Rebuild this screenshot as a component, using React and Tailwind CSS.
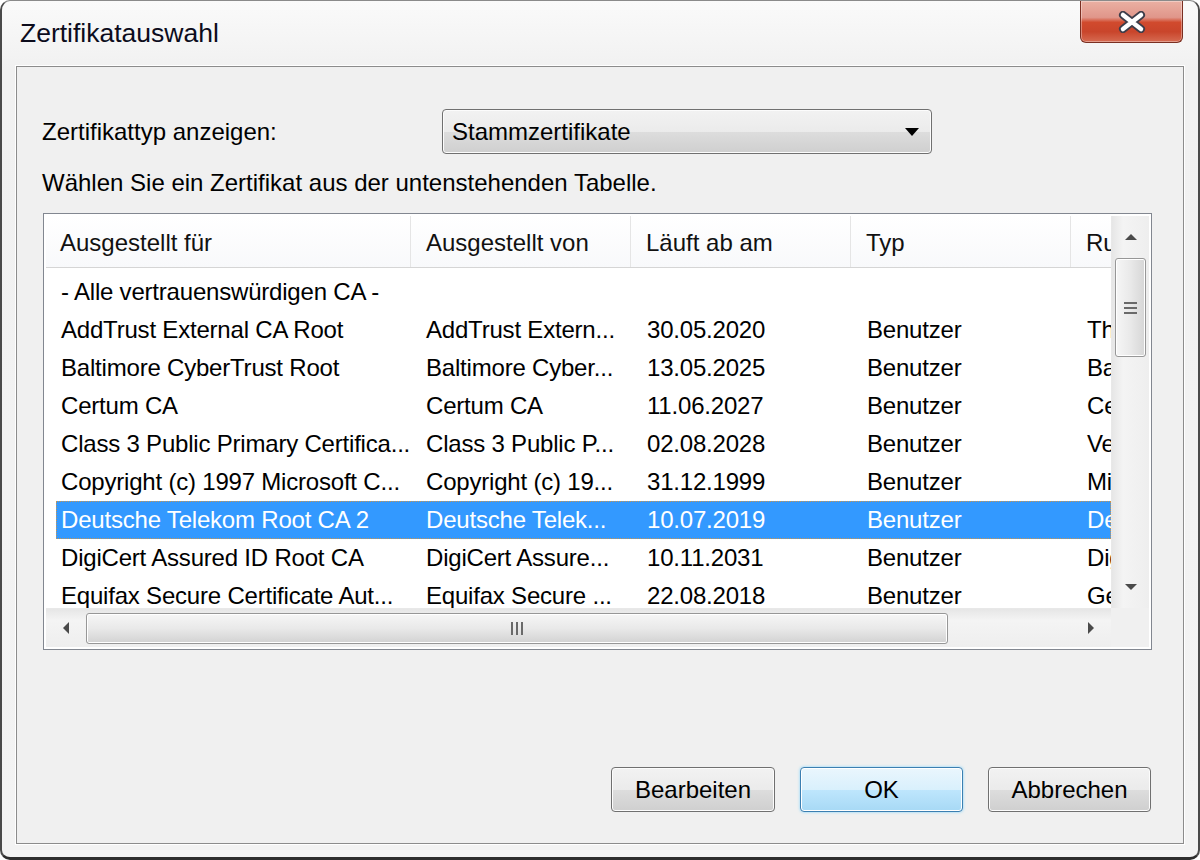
import React from "react";

const rows = [
  ["AddTrust External CA Root", "AddTrust Extern...", "30.05.2020", "Benutzer", "The USERTrust Network"],
  ["Baltimore CyberTrust Root", "Baltimore Cyber...", "13.05.2025", "Benutzer", "Baltimore CyberTrust"],
  ["Certum CA", "Certum CA", "11.06.2027", "Benutzer", "Certum"],
  ["Class 3 Public Primary Certifica...", "Class 3 Public P...", "02.08.2028", "Benutzer", "VeriSign Class 3"],
  ["Copyright (c) 1997 Microsoft C...", "Copyright (c) 19...", "31.12.1999", "Benutzer", "Microsoft Timestamp"],
  ["Deutsche Telekom Root CA 2", "Deutsche Telek...", "10.07.2019", "Benutzer", "Deutsche Telekom"],
  ["DigiCert Assured ID Root CA", "DigiCert Assure...", "10.11.2031", "Benutzer", "DigiCert"],
  ["Equifax Secure Certificate Aut...", "Equifax Secure ...", "22.08.2018", "Benutzer", "GeoTrust"],
];

const font = { fontFamily: '"Liberation Sans", Arial, sans-serif' };

function Tri({ dir, className }) {
  const pts = {
    up: "0,6 6,0 12,6",
    down: "0,0 12,0 6,6",
    left: "6,0 6,12 0,6",
    right: "0,0 0,12 6,6",
  }[dir];
  const vb = dir === "up" || dir === "down" ? "0 0 12 6" : "0 0 6 12";
  const size = dir === "up" || dir === "down" ? { w: 12, h: 6 } : { w: 6, h: 12 };
  return (
    <svg width={size.w} height={size.h} viewBox={vb} className={className}>
      <polygon points={pts} fill="#4a4a4a" />
    </svg>
  );
}

function Win7Button({ children, def, className = "" }) {
  return (
    <div
      className={
        "h-[45px] rounded-[4px] border flex items-center justify-center text-[24px] text-black " +
        (def
          ? "border-[#3c7fb1] bg-[linear-gradient(to_bottom,#eaf6fd_0%,#d9f0fc_50%,#bee6fd_51%,#a7d9f5_100%)] shadow-[inset_0_0_0_1px_#ffffff,0_0_3px_#7fd3ff] "
          : "border-[#707070] bg-[linear-gradient(to_bottom,#f2f2f2_0%,#ebebeb_50%,#dddddd_51%,#cfcfcf_100%)] shadow-[inset_0_0_0_1px_#fcfcfc] ") +
        className
      }
    >
      {children}
    </div>
  );
}

export default function App() {
  return (
    <div style={font} className="w-[1200px] h-[860px] overflow-hidden">
      <div className="w-[1200px] h-[860px] flex flex-col rounded-[10px] border-t border-l-2 border-r-2 border-b-[3px] border-t-[#8a8a8a] border-l-[#4a4a4a] border-r-[#4a4a4a] border-b-[#2e2e2e] bg-[linear-gradient(to_bottom,#fafafa_0%,#f1f1f1_8%,#f3f3f3_100%)]">
        {/* Title bar */}
        <div className="h-[65px] flex items-start justify-between shrink-0">
          <div className="pl-[18px] pt-[17px] text-[26.5px] leading-[30px] text-[#0c0c1c]">Zertifikatauswahl</div>
          <div className="mr-[15px] w-[103px] h-[42px] rounded-b-[6px] border border-t-0 border-[#7a2f22] bg-[linear-gradient(to_bottom,#eab0a3_0%,#e0968a_40%,#d14a2d_52%,#c9452b_75%,#d66b52_100%)] shadow-[inset_0_0_0_1px_rgba(255,255,255,0.35)] flex items-center justify-center">
            <svg width="30" height="22" viewBox="0 0 30 22">
              <path d="M6 4 L24 18 M24 4 L6 18" stroke="#3d3d4a" strokeWidth="8" strokeLinecap="round" fill="none" />
              <path d="M6 4 L24 18 M24 4 L6 18" stroke="#ffffff" strokeWidth="4.5" strokeLinecap="round" fill="none" />
            </svg>
          </div>
        </div>

        {/* Client area */}
        <div className="mx-[14px] h-[778px] border border-[#8c8c8c] shadow-[0_0_0_1px_#ffffff] bg-[#f0f0f0] flex flex-col text-[24px] text-black">
          <div className="mt-[42px] ml-[25px] flex items-center">
            <div className="w-[400px] leading-[28px]">Zertifikattyp anzeigen:</div>
            <div className="w-[490px] h-[45px] rounded-[4px] border border-[#707070] bg-[linear-gradient(to_bottom,#f2f2f2_0%,#ebebeb_50%,#dddddd_51%,#cfcfcf_100%)] shadow-[inset_0_0_0_1px_#fcfcfc] flex items-center justify-between pl-[9px] pr-[12px]">
              <span className="leading-[28px]">Stammzertifikate</span>
              <svg width="14" height="8" viewBox="0 0 14 8">
                <polygon points="0,0 14,0 7,8" fill="#000" />
              </svg>
            </div>
          </div>

          <div className="mt-[15px] ml-[25px] leading-[28px]">Wählen Sie ein Zertifikat aus der untenstehenden Tabelle.</div>

          {/* List view */}
          <div className="mt-[16px] ml-[26px] w-[1109px] h-[437px] border border-[#828790] bg-white p-[2px] flex flex-col">
            <div className="h-[392px] flex">
              <div className="w-[1066px] h-full overflow-hidden flex flex-col">
                {/* Header */}
                <div className="h-[52px] shrink-0 flex border-b border-[#d5d5d5] bg-[linear-gradient(to_bottom,#ffffff,#f8f9fb)] leading-[28px] text-[#111]">
                  <div className="w-[365px] shrink-0 pl-[14px] pt-[3px] border-r border-[#e5e5e5] flex items-center">Ausgestellt für</div>
                  <div className="w-[220px] shrink-0 pl-[15px] pt-[3px] border-r border-[#e5e5e5] flex items-center">Ausgestellt von</div>
                  <div className="w-[220px] shrink-0 pl-[15px] pt-[3px] border-r border-[#e5e5e5] flex items-center">Läuft ab am</div>
                  <div className="w-[220px] shrink-0 pl-[15px] pt-[3px] border-r border-[#e5e5e5] flex items-center">Typ</div>
                  <div className="w-[220px] shrink-0 pl-[15px] pt-[3px] flex items-center whitespace-nowrap">Rufname</div>
                </div>
                {/* Rows */}
                <div className="pt-[5px] flex flex-col tracking-[-0.2px]">
                  <div className="h-[38px] shrink-0 ml-[10px] pl-[5px] flex items-center whitespace-nowrap">- Alle vertrauenswürdigen CA -</div>
                  {rows.map((r, i) => {
                    const sel = i === 5;
                    return (
                      <div
                        key={i}
                        className={
                          "h-[38px] shrink-0 ml-[10px] flex items-center whitespace-nowrap border border-dotted " +
                          (sel ? "bg-[#3399ff] text-white border-[#c89450]" : "border-transparent")
                        }
                      >
                        <div className="w-[354px] shrink-0 pl-[4px] overflow-hidden">{r[0]}</div>
                        <div className="w-[220px] shrink-0 pl-[15px] overflow-hidden">{r[1]}</div>
                        <div className="w-[220px] shrink-0 pl-[16px] overflow-hidden">{r[2]}</div>
                        <div className="w-[220px] shrink-0 pl-[16px] overflow-hidden">{r[3]}</div>
                        <div className="w-[220px] shrink-0 pl-[16px] overflow-hidden">{r[4]}</div>
                      </div>
                    );
                  })}
                </div>
              </div>
              {/* Vertical scrollbar */}
              <div className="w-[38px] h-full flex flex-col bg-[linear-gradient(to_right,#e6e6e6,#f4f4f4_30%,#eeeeee)] border-l border-[#e8e8e8]">
                <div className="h-[42px] flex items-center justify-center">
                  <Tri dir="up" />
                </div>
                <div className="mx-[3px] h-[99px] rounded-[3px] border border-[#979797] bg-[linear-gradient(to_right,#f6f6f6,#e9e9e9_50%,#d6d6d6)] shadow-[inset_0_0_0_1px_#ffffff] flex flex-col items-center justify-center gap-[3px]">
                  <div className="w-[13px] h-[2px] bg-[#6a6a6a]" />
                  <div className="w-[13px] h-[2px] bg-[#6a6a6a]" />
                  <div className="w-[13px] h-[2px] bg-[#6a6a6a]" />
                </div>
                <div className="flex-1" />
                <div className="h-[42px] flex items-center justify-center">
                  <Tri dir="down" />
                </div>
              </div>
            </div>
            {/* Horizontal scrollbar */}
            <div className="h-[39px] flex">
              <div className="w-[1066px] flex items-center bg-[linear-gradient(to_bottom,#e6e6e6,#f4f4f4_30%,#eeeeee)] border-t border-[#e8e8e8]">
                <div className="w-[40px] h-full flex items-center justify-center">
                  <Tri dir="left" />
                </div>
                <div className="w-[862px] h-[31px] rounded-[3px] border border-[#979797] bg-[linear-gradient(to_bottom,#f6f6f6,#e9e9e9_50%,#d2d2d2)] shadow-[inset_0_0_0_1px_#ffffff] flex items-center justify-center gap-[3px]">
                  <div className="w-[2px] h-[13px] bg-[#6a6a6a]" />
                  <div className="w-[2px] h-[13px] bg-[#6a6a6a]" />
                  <div className="w-[2px] h-[13px] bg-[#6a6a6a]" />
                </div>
                <div className="flex-1 h-full flex items-center justify-end pr-[17px]">
                  <Tri dir="right" />
                </div>
              </div>
              <div className="w-[38px] bg-[#f0f0f0]" />
            </div>
          </div>

          {/* Buttons */}
          <div className="mt-[117px] mr-[32px] flex justify-end gap-[25px]">
            <Win7Button className="w-[164px]">Bearbeiten</Win7Button>
            <Win7Button def className="w-[163px]">OK</Win7Button>
            <Win7Button className="w-[163px]">Abbrechen</Win7Button>
          </div>
        </div>
      </div>
    </div>
  );
}
